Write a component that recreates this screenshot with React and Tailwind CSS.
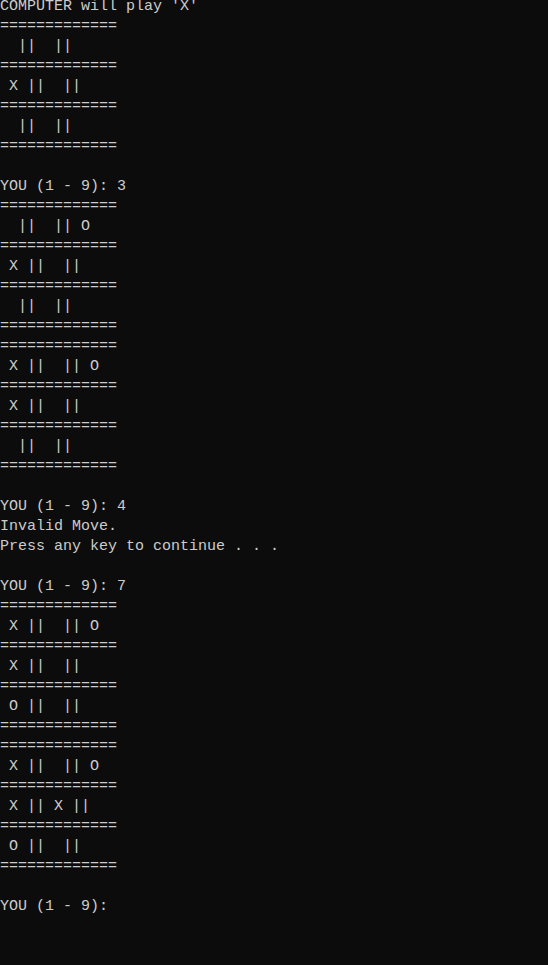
const lines = [
  "COMPUTER will play 'X'",
  "=============",
  "  ||  ||",
  "=============",
  " X ||  ||",
  "=============",
  "  ||  ||",
  "=============",
  "",
  "YOU (1 - 9): 3",
  "=============",
  "  ||  || O",
  "=============",
  " X ||  ||",
  "=============",
  "  ||  ||",
  "=============",
  "=============",
  " X ||  || O",
  "=============",
  " X ||  ||",
  "=============",
  "  ||  ||",
  "=============",
  "",
  "YOU (1 - 9): 4",
  "Invalid Move.",
  "Press any key to continue . . .",
  "",
  "YOU (1 - 9): 7",
  "=============",
  " X ||  || O",
  "=============",
  " X ||  ||",
  "=============",
  " O ||  ||",
  "=============",
  "=============",
  " X ||  || O",
  "=============",
  " X || X ||",
  "=============",
  " O ||  ||",
  "=============",
  "",
  "YOU (1 - 9):",
];

export default function App() {
  return (
    <div className="w-[548px] h-[965px] overflow-hidden bg-[#0c0c0c] text-[#cccccc] font-['Liberation_Mono',monospace] text-[15px] leading-[20px]">
      <div className="-mt-[3px] flex flex-col">
        {lines.map((l, i) => (
          <div key={i} className="h-[20px] whitespace-pre">
            {l}
          </div>
        ))}
      </div>
    </div>
  );
}
